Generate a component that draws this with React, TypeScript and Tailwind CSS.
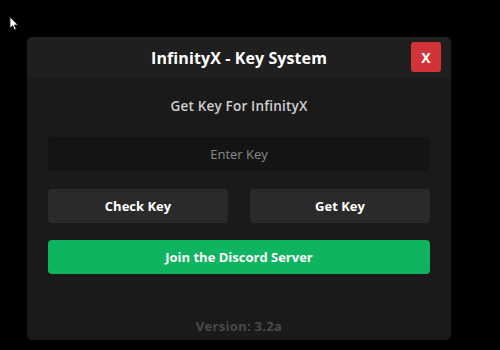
export default function App() {
  return (
    <div className="relative w-[500px] h-[350px] bg-black overflow-hidden" style={{ fontFamily: '"Open Sans", "Liberation Sans", sans-serif' }}>
      {/* mouse pointer */}
      <svg className="absolute left-[9px] top-[16px]" width="10" height="15" viewBox="0 0 10 15">
        <path d="M1 1 L1 12 L3.6 9.6 L5.6 14 L7.2 13.3 L5.3 9 L8.8 9 Z" fill="#fff" stroke="#222" strokeWidth="0.8" />
      </svg>

      <div className="absolute left-[27px] top-[37px] w-[424px] h-[303px] rounded-[5px] bg-[#1a1a1a] flex flex-col">
        <div className="h-[41px] shrink-0 bg-[#1f1f1f] rounded-t-[5px] flex items-center justify-center relative">
          <span className="text-white font-bold text-[16px] tracking-[0.1px]">InfinityX - Key System</span>
          <button className="absolute right-[10px] top-[5px] w-[30px] h-[30px] rounded-[3px] bg-[#d13438] text-white font-bold text-[14px] flex items-center justify-center">
            X
          </button>
        </div>

        <div className="flex flex-col px-[21px] flex-1">
          <div className="text-center text-[#cfcfcf] font-semibold text-[13.5px] tracking-[0.2px] mt-[18px]">Get Key For InfinityX</div>

          <div className="mt-[21px] h-[34px] rounded-[4px] bg-[#141414] flex items-center justify-center text-[13px] text-[#8a8a8a]">
            Enter Key
          </div>

          <div className="mt-[18px] grid grid-cols-2 gap-[22px]">
            <button className="h-[34px] rounded-[4px] bg-[#2a2a2a] text-white font-bold text-[13px]">Check Key</button>
            <button className="h-[34px] rounded-[4px] bg-[#2a2a2a] text-white font-bold text-[13px]">Get Key</button>
          </div>

          <button className="mt-[17px] h-[34px] rounded-[4px] bg-[#0fb460] text-white font-bold text-[13px]">
            Join the Discord Server
          </button>

          <div className="mt-auto mb-[4px] text-center text-[#4a4a4a] font-bold text-[13px] tracking-[0.3px]">Version: 3.2a</div>
        </div>
      </div>
    </div>
  );
}
